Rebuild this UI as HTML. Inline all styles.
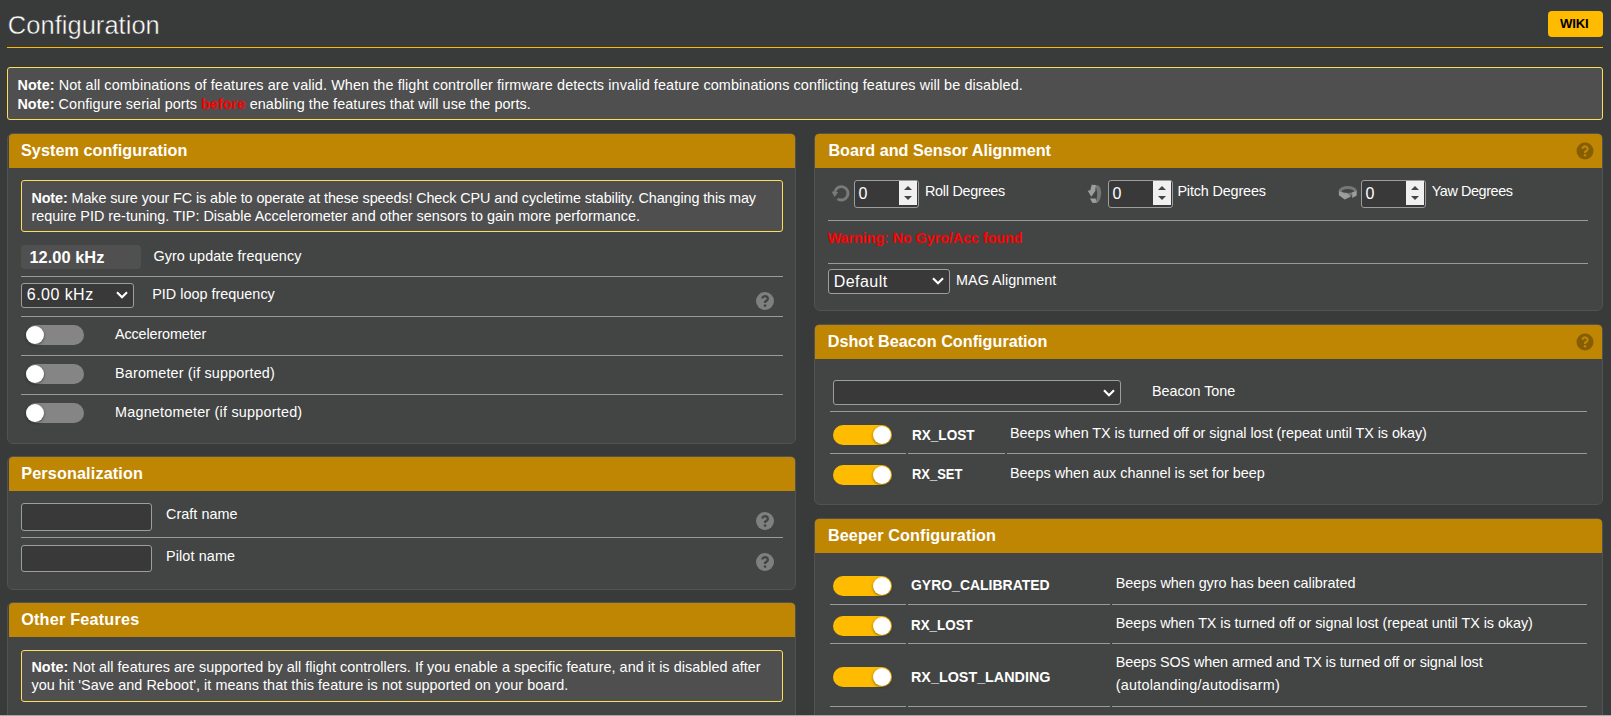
<!DOCTYPE html>
<html><head><meta charset="utf-8"><style>
html,body{margin:0;padding:0}
body{width:1611px;height:716px;overflow:hidden;background:#393b3a;position:relative;font-family:"Liberation Sans",sans-serif;color:#fff}
.r{position:absolute}
.t{position:absolute;white-space:nowrap}
.q{text-align:center;font-weight:bold;font-family:"Liberation Sans",sans-serif}
</style></head><body>
<div class="t " style="left:7.8px;top:10.16px;font-size:25.5px;line-height:30px;font-weight:normal;color:#ffffff;letter-spacing:0.025px;-webkit-text-stroke:0.45px #393b3a;">Configuration</div>
<div class="r" style="left:7px;top:47px;width:1596px;height:1px;background:#ffbb00"></div>
<div class="r" style="left:1548px;top:11px;width:55px;height:26px;background:#ffbb00;border-radius:4px"></div>
<div class="t " style="left:1560.1px;top:14.13px;font-size:13.2px;line-height:20px;font-weight:bold;color:#000;letter-spacing:-0.233px;">WIKI</div>
<div class="r" style="left:7px;top:67px;width:1596px;height:53px;background:#4f4f4f;border:1px solid #ffdd5c;box-sizing:border-box;border-radius:3px"></div>
<div class="t " style="left:17.4px;top:75.01px;font-size:14.4px;line-height:20px;font-weight:normal;color:#fff;letter-spacing:0.100px;"><b>Note:</b> Not all combinations of features are valid. When the flight controller firmware detects invalid feature combinations conflicting features will be disabled.</div>
<div class="t " style="left:17.4px;top:93.71px;font-size:14.4px;line-height:20px;font-weight:normal;color:#fff;letter-spacing:0.077px;"><b>Note:</b> Configure serial ports <b style="color:#ff0000">before</b> enabling the features that will use the ports.</div>
<div class="r" style="left:7px;top:133px;width:789px;height:311px;background:#434544;border:1px solid #515352;box-sizing:border-box;border-radius:6px"></div>
<div class="r" style="left:9px;top:134px;width:786px;height:34px;background:#bf8604;border-radius:4px 4px 0 0"></div>
<div class="t " style="left:21.0px;top:140.09px;font-size:16.2px;line-height:20px;font-weight:bold;color:#fff;letter-spacing:0.047px;">System configuration</div>
<div class="r" style="left:21px;top:180px;width:762px;height:52px;background:#4f4f4f;border:1px solid #ffdd5c;box-sizing:border-box;border-radius:3px"></div>
<div class="t " style="left:31.4px;top:187.81px;font-size:14.4px;line-height:20px;font-weight:normal;color:#fff;letter-spacing:-0.106px;"><b>Note:</b> Make sure your FC is able to operate at these speeds! Check CPU and cycletime stability. Changing this may</div>
<div class="t " style="left:31.4px;top:206.01px;font-size:14.4px;line-height:20px;font-weight:normal;color:#fff;letter-spacing:0.011px;">require PID re-tuning. TIP: Disable Accelerometer and other sensors to gain more performance.</div>
<div class="r" style="left:21px;top:245px;width:120px;height:24px;background:#505050;border-radius:4px"></div>
<div class="t " style="left:29.4px;top:246.52px;font-size:16.4px;line-height:20px;font-weight:bold;color:#fff;letter-spacing:0.038px;">12.00 kHz</div>
<div class="t " style="left:153.4px;top:245.71px;font-size:14.4px;line-height:20px;font-weight:normal;color:#fff;letter-spacing:0.080px;">Gyro update frequency</div>
<div class="r" style="left:21px;top:276px;width:762px;height:1px;background:#9a9a9a"></div>
<div class="r" style="left:21px;top:283px;width:113px;height:25px;background:#393939;border:1px solid #9d9d9d;box-sizing:border-box;border-radius:3px"></div>
<div class="t " style="left:26.8px;top:285.46px;font-size:16px;line-height:20px;font-weight:normal;color:#fff;letter-spacing:0.457px;">6.00 kHz</div>
<svg class="r" style="left:116px;top:291.0px" width="12" height="8" viewBox="0 0 12 8"><polyline points="1,1.2 6,6.2 11,1.2" fill="none" stroke="#fff" stroke-width="2.2"/></svg>
<div class="t " style="left:152.2px;top:283.71px;font-size:14.4px;line-height:20px;font-weight:normal;color:#fff;letter-spacing:0.012px;">PID loop frequency</div>
<svg class="r" style="left:756.0px;top:292.0px" width="18" height="18" viewBox="0 0 18 18"><g transform="translate(9 9) scale(1.000) translate(-9 -9)"><circle cx="9" cy="9" r="9" fill="#7f7f7f"/><path d="M6.35 6.6 A2.75 2.45 0 1 1 10.85 8.5 L9.1 9.8 L9.1 11.1" fill="none" stroke="#434544" stroke-width="2.3"/><circle cx="9.05" cy="13.6" r="1.35" fill="#434544"/></g></svg>
<div class="r" style="left:21px;top:316px;width:762px;height:1px;background:#9a9a9a"></div>
<div class="r" style="left:26px;top:325px;width:58px;height:20px;background:#858585;border-radius:10px"></div>
<div class="r" style="left:26px;top:326px;width:18px;height:18px;background:#fff;border-radius:50%;box-shadow:0 1px 3px rgba(0,0,0,0.45)"></div>
<div class="t " style="left:115.0px;top:323.71px;font-size:14.4px;line-height:20px;font-weight:normal;color:#fff;letter-spacing:-0.125px;">Accelerometer</div>
<div class="r" style="left:21px;top:355px;width:762px;height:1px;background:#9a9a9a"></div>
<div class="r" style="left:26px;top:364px;width:58px;height:20px;background:#858585;border-radius:10px"></div>
<div class="r" style="left:26px;top:365px;width:18px;height:18px;background:#fff;border-radius:50%;box-shadow:0 1px 3px rgba(0,0,0,0.45)"></div>
<div class="t " style="left:115.0px;top:362.71px;font-size:14.4px;line-height:20px;font-weight:normal;color:#fff;letter-spacing:0.165px;">Barometer (if supported)</div>
<div class="r" style="left:21px;top:394px;width:762px;height:1px;background:#9a9a9a"></div>
<div class="r" style="left:26px;top:403px;width:58px;height:20px;background:#858585;border-radius:10px"></div>
<div class="r" style="left:26px;top:404px;width:18px;height:18px;background:#fff;border-radius:50%;box-shadow:0 1px 3px rgba(0,0,0,0.45)"></div>
<div class="t " style="left:115.0px;top:401.71px;font-size:14.4px;line-height:20px;font-weight:normal;color:#fff;letter-spacing:0.215px;">Magnetometer (if supported)</div>
<div class="r" style="left:7px;top:456px;width:789px;height:134px;background:#434544;border:1px solid #515352;box-sizing:border-box;border-radius:6px"></div>
<div class="r" style="left:9px;top:457px;width:786px;height:34px;background:#bf8604;border-radius:4px 4px 0 0"></div>
<div class="t " style="left:21.2px;top:463.39px;font-size:16.2px;line-height:20px;font-weight:bold;color:#fff;letter-spacing:0.150px;">Personalization</div>
<div class="r" style="left:21px;top:503px;width:131px;height:28px;background:#393939;border:1px solid #9d9d9d;box-sizing:border-box;border-radius:3px"></div>
<div class="t " style="left:166.0px;top:504.01px;font-size:14.4px;line-height:20px;font-weight:normal;color:#fff;letter-spacing:0.033px;">Craft name</div>
<svg class="r" style="left:756.0px;top:512.0px" width="18" height="18" viewBox="0 0 18 18"><g transform="translate(9 9) scale(1.000) translate(-9 -9)"><circle cx="9" cy="9" r="9" fill="#7f7f7f"/><path d="M6.35 6.6 A2.75 2.45 0 1 1 10.85 8.5 L9.1 9.8 L9.1 11.1" fill="none" stroke="#434544" stroke-width="2.3"/><circle cx="9.05" cy="13.6" r="1.35" fill="#434544"/></g></svg>
<div class="r" style="left:21px;top:537px;width:762px;height:1px;background:#9a9a9a"></div>
<div class="r" style="left:21px;top:545px;width:131px;height:27px;background:#393939;border:1px solid #9d9d9d;box-sizing:border-box;border-radius:3px"></div>
<div class="t " style="left:166.0px;top:546.01px;font-size:14.4px;line-height:20px;font-weight:normal;color:#fff;letter-spacing:0.111px;">Pilot name</div>
<svg class="r" style="left:756.0px;top:553.0px" width="18" height="18" viewBox="0 0 18 18"><g transform="translate(9 9) scale(1.000) translate(-9 -9)"><circle cx="9" cy="9" r="9" fill="#7f7f7f"/><path d="M6.35 6.6 A2.75 2.45 0 1 1 10.85 8.5 L9.1 9.8 L9.1 11.1" fill="none" stroke="#434544" stroke-width="2.3"/><circle cx="9.05" cy="13.6" r="1.35" fill="#434544"/></g></svg>
<div class="r" style="left:7px;top:602px;width:789px;height:158px;background:#434544;border:1px solid #515352;box-sizing:border-box;border-radius:6px"></div>
<div class="r" style="left:9px;top:603px;width:786px;height:34px;background:#bf8604;border-radius:4px 4px 0 0"></div>
<div class="t " style="left:21.2px;top:608.89px;font-size:16.2px;line-height:20px;font-weight:bold;color:#fff;letter-spacing:0.215px;">Other Features</div>
<div class="r" style="left:21px;top:650px;width:762px;height:52px;background:#4f4f4f;border:1px solid #ffdd5c;box-sizing:border-box;border-radius:3px"></div>
<div class="t " style="left:31.4px;top:657.31px;font-size:14.4px;line-height:20px;font-weight:normal;color:#fff;letter-spacing:0.044px;"><b>Note:</b> Not all features are supported by all flight controllers. If you enable a specific feature, and it is disabled after</div>
<div class="t " style="left:31.4px;top:674.81px;font-size:14.4px;line-height:20px;font-weight:normal;color:#fff;letter-spacing:0.060px;">you hit 'Save and Reboot', it means that this feature is not supported on your board.</div>
<div class="r" style="left:814px;top:133px;width:789px;height:178px;background:#434544;border:1px solid #515352;box-sizing:border-box;border-radius:6px"></div>
<div class="r" style="left:815px;top:134px;width:787px;height:34px;background:#bf8604;border-radius:4px 4px 0 0"></div>
<div class="t " style="left:828.4px;top:140.09px;font-size:16.2px;line-height:20px;font-weight:bold;color:#fff;letter-spacing:0.004px;">Board and Sensor Alignment</div>
<svg class="r" style="left:1575.5px;top:142.4px" width="18" height="18" viewBox="0 0 18 18"><g transform="translate(9 9) scale(0.944) translate(-9 -9)"><circle cx="9" cy="9" r="9" fill="rgba(0,0,0,0.3)"/><path d="M6.35 6.6 A2.75 2.45 0 1 1 10.85 8.5 L9.1 9.8 L9.1 11.1" fill="none" stroke="#bf8604" stroke-width="2.3"/><circle cx="9.05" cy="13.6" r="1.35" fill="#bf8604"/></g></svg>
<svg class="r" style="left:831px;top:184px" width="20" height="20" viewBox="0 0 20 20"><path d="M3.75 7.9 A6.7 6.7 0 1 1 6.46 14.79" fill="none" stroke="#7a7a7a" stroke-width="2.8"/><polygon points="0.6,7.4 7.2,7.9 3.6,12.9" fill="#7a7a7a"/></svg>
<div class="r" style="left:854px;top:180px;width:65px;height:28px;background:#393939;border:1px solid #9d9d9d;box-sizing:border-box;border-radius:3px"></div>
<div class="r" style="left:899px;top:181px;width:18px;height:24px;background:#f0f0f0"></div>
<svg class="r" style="left:899px;top:181px" width="18" height="24" viewBox="0 0 18 24"><polygon points="5,9 9,5 13,9" fill="#444"/><polygon points="5,15 13,15 9,19" fill="#444"/></svg>
<div class="t " style="left:858.6px;top:183.96px;font-size:16px;line-height:20px;font-weight:normal;color:#fff;">0</div>
<div class="t " style="left:925.0px;top:181.01px;font-size:14.4px;line-height:20px;font-weight:normal;color:#fff;letter-spacing:-0.282px;">Roll Degrees</div>
<svg class="r" style="left:1080px;top:180px" width="28" height="28" viewBox="0 0 28 28"><polygon points="15.6,5.1 18.4,5.5 20.3,7.8 21.3,12.9 20.3,18.4 18.4,21.9 16.4,22.7 15.6,21.9 16.8,18.4 17.2,12.9 16.4,8.6 15.6,7.8" fill="#767676"/><polygon points="11.7,4.7 16,5.1 15.3,9.8 15.6,10.4 11.3,16.8 7.6,10.4 10.2,10.6" fill="#9d9d9d"/><polygon points="10,18.4 15.6,18.4 16.8,22.7 12.5,22.9" fill="#9d9d9d"/></svg>
<div class="r" style="left:1108px;top:180px;width:65px;height:28px;background:#393939;border:1px solid #9d9d9d;box-sizing:border-box;border-radius:3px"></div>
<div class="r" style="left:1153px;top:181px;width:18px;height:24px;background:#f0f0f0"></div>
<svg class="r" style="left:1153px;top:181px" width="18" height="24" viewBox="0 0 18 24"><polygon points="5,9 9,5 13,9" fill="#444"/><polygon points="5,15 13,15 9,19" fill="#444"/></svg>
<div class="t " style="left:1112.6px;top:183.96px;font-size:16px;line-height:20px;font-weight:normal;color:#fff;">0</div>
<div class="t " style="left:1177.4px;top:181.01px;font-size:14.4px;line-height:20px;font-weight:normal;color:#fff;letter-spacing:-0.150px;">Pitch Degrees</div>
<svg class="r" style="left:1333px;top:180px" width="28" height="28" viewBox="0 0 28 28"><ellipse cx="14.8" cy="11" rx="7.7" ry="3.5" fill="none" stroke="#767676" stroke-width="3"/><polygon points="5.9,10.9 5.9,15.3 11.7,19.6 18,16.4 12.9,12.5 11.7,13.5" fill="#9d9d9d"/><polygon points="19.2,12.5 23.7,11.1 23.7,15.6 19.2,18" fill="#9d9d9d"/></svg>
<div class="r" style="left:1361px;top:180px;width:65px;height:28px;background:#393939;border:1px solid #9d9d9d;box-sizing:border-box;border-radius:3px"></div>
<div class="r" style="left:1406px;top:181px;width:18px;height:24px;background:#f0f0f0"></div>
<svg class="r" style="left:1406px;top:181px" width="18" height="24" viewBox="0 0 18 24"><polygon points="5,9 9,5 13,9" fill="#444"/><polygon points="5,15 13,15 9,19" fill="#444"/></svg>
<div class="t " style="left:1365.6px;top:183.96px;font-size:16px;line-height:20px;font-weight:normal;color:#fff;">0</div>
<div class="t " style="left:1431.7px;top:181.01px;font-size:14.4px;line-height:20px;font-weight:normal;color:#fff;letter-spacing:-0.400px;">Yaw Degrees</div>
<div class="r" style="left:828px;top:220px;width:760px;height:1px;background:#9a9a9a"></div>
<div class="t " style="left:827.4px;top:227.61px;font-size:14.4px;line-height:20px;font-weight:bold;color:#ff0000;letter-spacing:-0.080px;">Warning: No Gyro/Acc found</div>
<div class="r" style="left:828px;top:263px;width:760px;height:1px;background:#9a9a9a"></div>
<div class="r" style="left:828px;top:269px;width:122px;height:25px;background:#393939;border:1px solid #9d9d9d;box-sizing:border-box;border-radius:3px"></div>
<div class="t " style="left:833.8px;top:271.96px;font-size:16px;line-height:20px;font-weight:normal;color:#fff;letter-spacing:0.433px;">Default</div>
<svg class="r" style="left:932px;top:277.0px" width="12" height="8" viewBox="0 0 12 8"><polyline points="1,1.2 6,6.2 11,1.2" fill="none" stroke="#fff" stroke-width="2.2"/></svg>
<div class="t " style="left:956.1px;top:269.71px;font-size:14.4px;line-height:20px;font-weight:normal;color:#fff;letter-spacing:0.008px;">MAG Alignment</div>
<div class="r" style="left:814px;top:324px;width:789px;height:181px;background:#434544;border:1px solid #515352;box-sizing:border-box;border-radius:6px"></div>
<div class="r" style="left:815px;top:325px;width:787px;height:34px;background:#bf8604;border-radius:4px 4px 0 0"></div>
<div class="t " style="left:827.7px;top:330.89px;font-size:16.2px;line-height:20px;font-weight:bold;color:#fff;letter-spacing:0.012px;">Dshot Beacon Configuration</div>
<svg class="r" style="left:1575.5px;top:333.4px" width="18" height="18" viewBox="0 0 18 18"><g transform="translate(9 9) scale(0.944) translate(-9 -9)"><circle cx="9" cy="9" r="9" fill="rgba(0,0,0,0.3)"/><path d="M6.35 6.6 A2.75 2.45 0 1 1 10.85 8.5 L9.1 9.8 L9.1 11.1" fill="none" stroke="#bf8604" stroke-width="2.3"/><circle cx="9.05" cy="13.6" r="1.35" fill="#bf8604"/></g></svg>
<div class="r" style="left:833px;top:380px;width:288px;height:25px;background:#393939;border:1px solid #9d9d9d;box-sizing:border-box;border-radius:3px"></div>
<svg class="r" style="left:1103px;top:389.0px" width="12" height="8" viewBox="0 0 12 8"><polyline points="1,1.2 6,6.2 11,1.2" fill="none" stroke="#fff" stroke-width="2.2"/></svg>
<div class="t " style="left:1152.0px;top:380.91px;font-size:14.4px;line-height:20px;font-weight:normal;color:#fff;letter-spacing:-0.060px;">Beacon Tone</div>
<div class="r" style="left:830px;top:411px;width:757px;height:1px;background:#9a9a9a"></div>
<div class="r" style="left:833px;top:425px;width:59px;height:20px;background:#ffbb00;border-radius:10px"></div>
<div class="r" style="left:873px;top:426px;width:18px;height:18px;background:#fff;border-radius:50%;box-shadow:0 1px 3px rgba(0,0,0,0.45)"></div>
<div class="t " style="left:911.6px;top:425.06px;font-size:15.4px;line-height:20px;font-weight:bold;color:#fff;transform:scaleX(0.8803);transform-origin:0 0;">RX_LOST</div>
<div class="t " style="left:1010.0px;top:423.01px;font-size:14.4px;line-height:20px;font-weight:normal;color:#fff;letter-spacing:-0.058px;">Beeps when TX is turned off or signal lost (repeat until TX is okay)</div>
<div class="r" style="left:830px;top:453px;width:76px;height:1px;background:#9a9a9a"></div>
<div class="r" style="left:908px;top:453px;width:97px;height:1px;background:#9a9a9a"></div>
<div class="r" style="left:1007px;top:453px;width:580px;height:1px;background:#9a9a9a"></div>
<div class="r" style="left:833px;top:465px;width:59px;height:20px;background:#ffbb00;border-radius:10px"></div>
<div class="r" style="left:873px;top:466px;width:18px;height:18px;background:#fff;border-radius:50%;box-shadow:0 1px 3px rgba(0,0,0,0.45)"></div>
<div class="t " style="left:911.6px;top:464.16px;font-size:15.4px;line-height:20px;font-weight:bold;color:#fff;transform:scaleX(0.8417);transform-origin:0 0;">RX_SET</div>
<div class="t " style="left:1010.0px;top:462.61px;font-size:14.4px;line-height:20px;font-weight:normal;color:#fff;letter-spacing:-0.011px;">Beeps when aux channel is set for beep</div>
<div class="r" style="left:814px;top:518px;width:789px;height:242px;background:#434544;border:1px solid #515352;box-sizing:border-box;border-radius:6px"></div>
<div class="r" style="left:815px;top:519px;width:787px;height:34px;background:#bf8604;border-radius:4px 4px 0 0"></div>
<div class="t " style="left:827.9px;top:524.79px;font-size:16.2px;line-height:20px;font-weight:bold;color:#fff;letter-spacing:0.137px;">Beeper Configuration</div>
<div class="r" style="left:833px;top:576px;width:59px;height:20px;background:#ffbb00;border-radius:10px"></div>
<div class="r" style="left:873px;top:577px;width:18px;height:18px;background:#fff;border-radius:50%;box-shadow:0 1px 3px rgba(0,0,0,0.45)"></div>
<div class="t " style="left:911.4px;top:575.36px;font-size:15.4px;line-height:20px;font-weight:bold;color:#fff;transform:scaleX(0.9073);transform-origin:0 0;">GYRO_CALIBRATED</div>
<div class="t " style="left:1115.8px;top:573.31px;font-size:14.4px;line-height:20px;font-weight:normal;color:#fff;letter-spacing:-0.032px;">Beeps when gyro has been calibrated</div>
<div class="r" style="left:830px;top:604px;width:76px;height:1px;background:#9a9a9a"></div>
<div class="r" style="left:908px;top:604px;width:202px;height:1px;background:#9a9a9a"></div>
<div class="r" style="left:1112px;top:604px;width:475px;height:1px;background:#9a9a9a"></div>
<div class="r" style="left:833px;top:616px;width:59px;height:20px;background:#ffbb00;border-radius:10px"></div>
<div class="r" style="left:873px;top:617px;width:18px;height:18px;background:#fff;border-radius:50%;box-shadow:0 1px 3px rgba(0,0,0,0.45)"></div>
<div class="t " style="left:911.4px;top:614.66px;font-size:15.4px;line-height:20px;font-weight:bold;color:#fff;transform:scaleX(0.8705);transform-origin:0 0;">RX_LOST</div>
<div class="t " style="left:1115.8px;top:613.01px;font-size:14.4px;line-height:20px;font-weight:normal;color:#fff;letter-spacing:-0.055px;">Beeps when TX is turned off or signal lost (repeat until TX is okay)</div>
<div class="r" style="left:830px;top:643px;width:76px;height:1px;background:#9a9a9a"></div>
<div class="r" style="left:908px;top:643px;width:202px;height:1px;background:#9a9a9a"></div>
<div class="r" style="left:1112px;top:643px;width:475px;height:1px;background:#9a9a9a"></div>
<div class="r" style="left:833px;top:667px;width:59px;height:20px;background:#ffbb00;border-radius:10px"></div>
<div class="r" style="left:873px;top:668px;width:18px;height:18px;background:#fff;border-radius:50%;box-shadow:0 1px 3px rgba(0,0,0,0.45)"></div>
<div class="t " style="left:911.4px;top:667.06px;font-size:15.4px;line-height:20px;font-weight:bold;color:#fff;transform:scaleX(0.9318);transform-origin:0 0;">RX_LOST_LANDING</div>
<div class="t " style="left:1115.8px;top:651.81px;font-size:14.4px;line-height:20px;font-weight:normal;color:#fff;letter-spacing:-0.098px;">Beeps SOS when armed and TX is turned off or signal lost</div>
<div class="t " style="left:1115.8px;top:675.31px;font-size:14.4px;line-height:20px;font-weight:normal;color:#fff;letter-spacing:0.209px;">(autolanding/autodisarm)</div>
<div class="r" style="left:830px;top:706px;width:76px;height:1px;background:#9a9a9a"></div>
<div class="r" style="left:908px;top:706px;width:202px;height:1px;background:#9a9a9a"></div>
<div class="r" style="left:1112px;top:706px;width:475px;height:1px;background:#9a9a9a"></div>
<div class="r" style="left:0px;top:715px;width:1611px;height:1px;background:#a8a8a8"></div>
</body></html>
